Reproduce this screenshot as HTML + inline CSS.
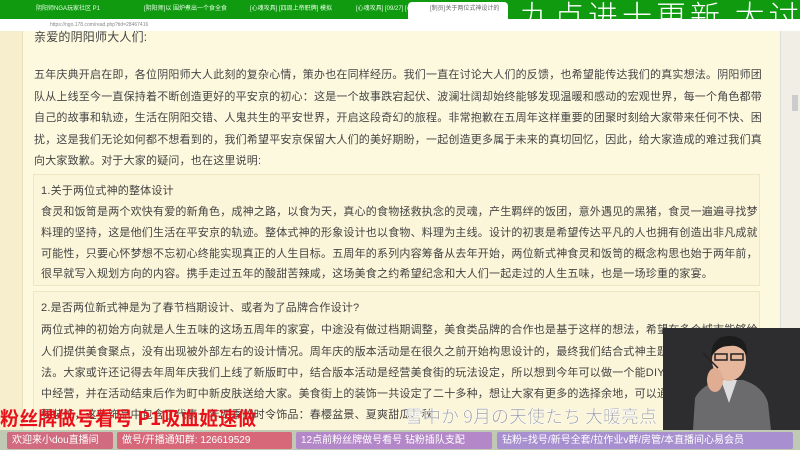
<!DOCTYPE html>
<html><head><meta charset="utf-8"><style>
*{margin:0;padding:0;box-sizing:border-box}
body{width:800px;height:450px;overflow:hidden;position:relative;background:#fdf9df;font-family:"Liberation Sans","Noto Sans CJK SC",sans-serif;color:#444}
.tabs{position:absolute;left:0;top:0;width:800px;height:19px;background:#0f9a0f}
.tab{position:absolute;top:2px;height:17px;font-size:6px;color:#e8ffe8;line-height:15px;padding-left:22px;white-space:nowrap}
.tab.act{background:#fff;color:#666;border-radius:4px 4px 0 0}
.addr{position:absolute;left:0;top:19px;width:800px;height:12px;background:#fff;font-size:5px;color:#888;line-height:12px}
.big{position:absolute;left:520px;top:-8px;font-size:30px;color:#fff;white-space:nowrap;letter-spacing:4px;font-family:"Noto Sans CJK SC",sans-serif;font-weight:300}
.lm{position:absolute;left:0;top:31px;width:23px;height:400px;background:#f6eecd;border-right:1px solid #eadfb8}
.rm{position:absolute;left:780px;top:31px;width:20px;height:400px;background:#f1eee6;border-left:1px solid #ddd}
.sb{position:absolute;left:792px;top:95px;width:6px;height:16px;background:#ccc}
.t{position:absolute;left:34px;font-size:11px;white-space:nowrap;overflow:hidden;width:728px;letter-spacing:0.2px;line-height:14px}
.b{left:41px;width:716px}
.box{position:absolute;left:33px;width:727px;background:#fbf5d9;border:1px solid #efe6c2}
.bot{position:absolute;left:0;top:430px;width:800px;height:20px;background:#bfc9b4}
.pill{position:absolute;top:2px;height:17px;font-size:10px;color:#fff;line-height:17px;padding:0 5px;white-space:nowrap;overflow:hidden;border-radius:2px}
.red{position:absolute;left:0;top:404px;font-size:19px;font-weight:bold;color:#e8101a;white-space:nowrap;font-family:"Noto Sans CJK SC",sans-serif}
.ov{position:absolute;left:405px;top:403px;font-size:18px;color:#999;white-space:nowrap;font-family:"Noto Sans CJK SC",sans-serif;-webkit-text-stroke:0.6px #fff}
.cam{position:absolute;left:663px;top:328px;width:137px;height:102px;background:#2b2b2d}
</style></head><body>
<div class="tabs">
<div class="tab" style="left:14px">阴阳师NGA玩家社区 P1</div>
<div class="tab" style="left:122px">[阴阳师]以 围炉煮出一个食全食</div>
<div class="tab" style="left:228px">[心魂攻具] [四周上帝职牌] 模拟</div>
<div class="tab" style="left:334px">[心魂攻具] [09/27] [v3.1] 阴阳</div>
<div class="tab act" style="left:408px;width:100px">[制员]关于两位式神设计的</div>
</div>
<div class="big">九点进十更新 大讨论</div>
<div class="addr"><span style="margin-left:50px">https://ngo.178.com/read.php?tid=28467416</span></div>
<div class="lm"></div><div class="rm"></div><div class="sb"></div>
<div class="t" style="top:30px;font-size:12px">亲爱的阴阳师大人们:</div>
<div class="t" style="top:68px">五年庆典开启在即，各位阴阳师大人此刻的复杂心情，策办也在同样经历。我们一直在讨论大人们的反馈，也希望能传达我们的真实想法。阴阳师团</div>
<div class="t" style="top:90px">队从上线至今一直保持着不断创造更好的平安京的初心：这是一个故事跌宕起伏、波澜壮阔却始终能够发现温暖和感动的宏观世界，每一个角色都带着</div>
<div class="t" style="top:111px">自己的故事和轨迹，生活在阴阳交错、人鬼共生的平安世界，开启这段奇幻的旅程。非常抱歉在五周年这样重要的团聚时刻给大家带来任何不快、困</div>
<div class="t" style="top:133px">扰，这是我们无论如何都不想看到的，我们希望平安京保留大人们的美好期盼，一起创造更多属于未来的真切回忆，因此，给大家造成的难过我们真诚</div>
<div class="t" style="top:154px">向大家致歉。对于大家的疑问，也在这里说明:</div>
<div class="box" style="top:174px;height:112px"></div>
<div class="t b" style="top:184px">1.关于两位式神的整体设计</div>
<div class="t b" style="top:205px">食灵和饭笥是两个欢快有爱的新角色，成神之路，以食为天，真心的食物拯救执念的灵魂，产生羁绊的饭团，意外遇见的黑猪，食灵一遍遍寻找梦之</div>
<div class="t b" style="top:226px">料理的坚持，这是他们生活在平安京的轨迹。整体式神的形象设计也以食物、料理为主线。设计的初衷是希望传达平凡的人也拥有创造出非凡成就的</div>
<div class="t b" style="top:247px">可能性，只要心怀梦想不忘初心终能实现真正的人生目标。五周年的系列内容筹备从去年开始，两位新式神食灵和饭笥的概念构思也始于两年前，是</div>
<div class="t b" style="top:267px">很早就写入规划方向的内容。携手走过五年的酸甜苦辣咸，这场美食之约希望纪念和大人们一起走过的人生五味，也是一场珍重的家宴。</div>
<div class="box" style="top:291px;height:140px"></div>
<div class="t b" style="top:301px">2.是否两位新式神是为了春节档期设计、或者为了品牌合作设计?</div>
<div class="t b" style="top:323px">两位式神的初始方向就是人生五味的这场五周年的家宴，中途没有做过档期调整，美食类品牌的合作也是基于这样的想法，希望在多个城市能够给大</div>
<div class="t b" style="top:345px">人们提供美食聚点，没有出现被外部左右的设计情况。周年庆的版本活动是在很久之前开始构思设计的，最终我们结合式神主题定为美食街的经营玩</div>
<div class="t b" style="top:366px">法。大家或许还记得去年周年庆我们上线了新版町中，结合版本活动是经营美食街的玩法设定，所以想到今年可以做一个能DIY装饰的美食街在町</div>
<div class="t b" style="top:387px">中经营，并在活动结束后作为町中新皮肤送给大家。美食街上的装饰一共设定了二十多种，想让大家有更多的选择余地，可以通过自由</div>
<div class="t b" style="top:408px">要装饰，这些饰品中包含了代表一年四季的时令饰品：春樱盆景、夏爽甜瓜、秋</div>
<div class="red">粉丝牌做号看号 P1吸血姬速做</div>
<div class="ov">雪中か 9月の天使たち 大暖亮点</div>
<div class="cam">
<svg width="137" height="102" viewBox="0 0 137 102">
<rect width="137" height="102" fill="#2d2d30"/>
<path d="M30 102 L32 70 Q40 55 60 52 L80 52 Q100 58 105 75 L108 102Z" fill="#6b6a6c"/>
<path d="M58 52 L66 75 L74 52Z" fill="#ddd"/>
<ellipse cx="66" cy="32" rx="17" ry="21" fill="#e6b79d"/>
<path d="M48 30 Q48 8 66 8 Q85 8 84 28 Q78 16 66 18 Q54 18 48 30Z" fill="#1c1c1c"/>
<rect x="52" y="26" width="12" height="6" fill="none" stroke="#222" stroke-width="1.5"/>
<rect x="68" y="26" width="12" height="6" fill="none" stroke="#222" stroke-width="1.5"/>
<ellipse cx="52" cy="52" rx="8" ry="12" fill="#e0ad92"/>
<path d="M40 25 L55 40" stroke="#222" stroke-width="1.5"/>
</svg>
</div>
<div class="bot">
<div class="pill" style="left:7px;width:106px;background:#d16c80">欢迎来小dou直播间</div>
<div class="pill" style="left:117px;width:175px;background:#d6687a">做号/开播通知群: 126619529</div>
<div class="pill" style="left:296px;width:196px;background:#b488c8">12点前粉丝牌做号看号 钻粉插队支配</div>
<div class="pill" style="left:497px;width:296px;background:#a890d0">钻粉=找号/新号全套/拉作业v群/房管/本直播间心易会员</div>
</div>
</body></html>
